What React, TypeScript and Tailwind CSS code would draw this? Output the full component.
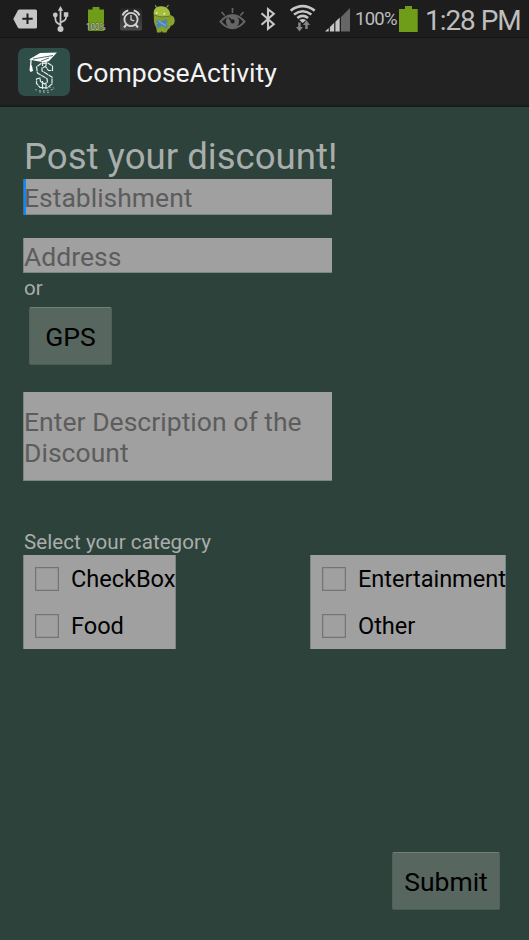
import { useState } from "react";
import clsx from "clsx";

const LEFT_CATEGORIES = ["CheckBox", "Food"];
const RIGHT_CATEGORIES = ["Entertainment", "Other"];

function StatusBar() {
  return (
    <div className="flex h-[37px] items-start overflow-hidden bg-[#1d1d1d] text-[#bebebe]">
      {/* keyboard / clear */}
      <svg className="ml-[13px] mt-[9px] h-5 w-[25px] shrink-0" viewBox="13 9 25 20">
        <path fill="#c6c6c6" d="M19.5 9.5H35.5Q37 9.5 37 11V27Q37 28.5 35.5 28.5H19.5Q18.5 28.5 17.8 27.5L13.3 19L17.8 10.5Q18.5 9.5 19.5 9.5Z" />
        <path stroke="#1d1d1d" strokeWidth="2" d="M22.3 18.8H32.7M27.5 13.6V24" />
      </svg>
      {/* usb */}
      <svg className="ml-[14px] mt-[6px] h-[27px] w-[18px] shrink-0" viewBox="52 6 18 27" fill="none" stroke="#c6c6c6" strokeWidth="1.8">
        <path d="M60.5 9V28M60.5 25C55.8 22.5 55.3 21.5 55.3 17M60.5 22.5C66 20.5 66.2 19 66.2 15" />
        <path fill="#c6c6c6" stroke="none" d="M60.5 6L63.2 10.7H57.8ZM63.8 12.3H68.3V16.8H63.8Z" />
        <circle cx="55.3" cy="15" r="2.4" fill="#c6c6c6" stroke="none" />
        <circle cx="60.5" cy="29" r="3" fill="#c6c6c6" stroke="none" />
      </svg>
      {/* small battery */}
      <svg className="ml-[15px] mt-[6px] h-[25px] w-[22px] shrink-0" viewBox="85 6 22 25">
        <path fill="#6f9d1a" d="M92.5 7H99.5V9.5H104V31H88V9.5H92.5Z" />
        <text x="86" y="29.7" textLength="19.5" lengthAdjust="spacingAndGlyphs" fontFamily="Roboto, sans-serif" fontSize="8.5" fill="#d0d0d0" stroke="#3a4a1c" strokeWidth="0.8" paintOrder="stroke">100%</text>
      </svg>
      {/* alarm */}
      <svg className="ml-[13px] mt-[8px] h-[23px] w-[22px] shrink-0" viewBox="120 8 22 23">
        <defs>
          <linearGradient id="alarmBg" x2="0" y2="1">
            <stop stopColor="#242424" />
            <stop offset="1" stopColor="#4a4a4a" />
          </linearGradient>
        </defs>
        <rect x="120" y="8" width="22" height="22.5" rx="2" fill="url(#alarmBg)" />
        <g fill="none" stroke="#d2d2d2">
          <circle cx="131" cy="19.5" r="6.6" strokeWidth="1.9" />
          <path strokeWidth="1.3" d="M131 15V19.7L134.3 21" />
          <path strokeWidth="2.1" d="M122.7 15.5Q124 11.3 128.3 10.5M139.3 15.5Q138 11.3 133.7 10.5M126.5 24.5L124 27.5M135.5 24.5L138 27.5" />
        </g>
      </svg>
      {/* android debug */}
      <svg className="ml-[10px] mt-[4px] h-[29px] w-6 shrink-0" viewBox="152 4 24 29">
        <ellipse cx="170.3" cy="20.5" rx="4.4" ry="5.3" fill="#8ba62d" />
        <path fill="#86a12a" d="M154 14L171 15Q173 27 167.5 30L166.5 32.5H162.5L162 31L160.5 32.5H157L156.3 28Q153 23 154 14Z" />
        <path fill="#a5bd3e" d="M153.8 14.5C153 8.8 156.5 5.8 161.5 6.2C167 6.6 170.5 10 170.2 15.5Q162 18 153.8 14.5Z" />
        <path stroke="#66801e" strokeWidth="1" d="M153.5 15Q161 18.5 170.5 16" fill="none" />
        <path stroke="#91aa33" strokeWidth="1.2" d="M156.5 7.5L155.3 5.3M166.5 7.5L168.5 5" />
        <circle cx="156.7" cy="12.8" r="0.9" fill="#eee" />
        <circle cx="164.3" cy="13.7" r="0.9" fill="#eee" />
        <path stroke="#4d83bd" strokeWidth="3.8" d="M157 20.5L167 27M167 20.5L157 26.5" />
        <path stroke="#7daad4" strokeWidth="1.2" d="M158 20.5L166 26" />
      </svg>
      {/* smart stay eye */}
      <svg className="ml-[43px] mt-[8px] h-[22px] w-[28px] shrink-0" viewBox="219 8 28 22">
        <path fill="none" stroke="#666" strokeWidth="1.7" d="M221.5 12L224.7 15.5M232.5 8V13M243.5 12L240.3 15.5" />
        <path fill="none" stroke="#666" strokeWidth="2" d="M220.5 21.7Q226 15 232.5 15T244.5 21.7Q239 28.3 232.5 28.3T220.5 21.7Z" />
        <circle cx="232.5" cy="21.5" r="6.6" fill="#666" />
        <path stroke="#1d1d1d" strokeWidth="1.5" d="M228.8 17.8L232 21" />
        <circle cx="232.6" cy="21.4" r="2.1" fill="#1d1d1d" />
      </svg>
      {/* bluetooth */}
      <svg className="ml-[13px] mt-[7px] h-6 w-4 shrink-0" viewBox="260 7 16 24" fill="none" stroke="#c6c6c6" strokeWidth="2.1">
        <path d="M261.5 13.2L273.8 24.3L268 28.8V9.2L273.8 13.7L261.5 24.8" />
      </svg>
      {/* wifi */}
      <svg className="ml-[14px] mt-[4px] h-7 w-[26px] shrink-0" viewBox="290 4 26 28">
        <g fill="none" stroke="#c6c6c6" strokeWidth="2.6">
          <path d="M290.7 10.6Q302.7 1.8 314.7 10.6M294 14.5Q302.7 8 311.4 14.5M297.3 18Q302.7 13.8 308.1 18" />
        </g>
        <path fill="#c6c6c6" d="M299.3 20Q302.7 17.8 306.1 20L302.7 23Z" />
        <path fill="#858585" d="M298.2 22.5H300.7V27H303L299.5 31.5L296 27H298.2ZM305.2 29V25H303L306.5 20.3L310 25H307.7V29Z" />
      </svg>
      {/* signal */}
      <svg className="ml-[9px] mt-[7px] h-[25px] w-[26px] shrink-0" viewBox="325 7 26 25">
        <path fill="#666" d="M341 17L350 8V31.5H341Z" />
        <path fill="#c6c6c6" d="M325 31.5L328.7 28V31.5ZM329.9 27L334.2 22.8V31.5H329.9ZM335.4 21.7L339.7 17.5V31.5H335.4Z" />
      </svg>
      <span className="ml-[4px] mt-[8px] w-[43px] whitespace-nowrap text-[18.5px] leading-[23px] tracking-[-0.75px]">100%</span>
      <svg className="ml-[1px] mt-[6px] h-[26px] w-[19px] shrink-0" viewBox="399 6 19 26">
        <path fill="#6f9d1a" d="M405 6H412V9H417.7V32H399V9H405Z" />
      </svg>
      <span className="ml-[7px] mt-[5px] whitespace-nowrap text-[28px] leading-8 tracking-[-1.05px]">1:28 PM</span>
    </div>
  );
}

function AppLogo() {
  return (
    <svg className="ml-[18px] h-12 w-[52px] shrink-0" viewBox="0 0 52 48">
      <rect width="52" height="48" rx="7" fill="#304e48" />
      <path fill="#fff" d="M11 11.5L22 5L39 4.5L31 13L27 14.5Q18 13 11 11.5Z" />
      <path fill="none" stroke="#304e48" strokeWidth="0.8" d="M15 11L35 7.5M23 13L31 10" />
      <path fill="none" stroke="#fff" strokeWidth="1.3" d="M13 12L12.7 18" />
      <path fill="#fff" d="M12 17.5H14L15 23L12.5 24L11.5 22Z" />
      <g fill="none" stroke="#e2e9e7" strokeWidth="1.2">
        <path strokeDasharray="5 .5" d="M34.5 22.5V18L30 15L23 15.5L18.5 19L19.5 25L29 30.5L29.5 34L26.5 36L22.5 33.5L22 30L18.5 31V35.5L22 39.5L29 40L34 36L34 29L24 23L24 20L27.5 18.5L30.5 22.5Z" />
        <path d="M24.5 14V18M28 14V18M24.5 33V41M28 36V41" />
        <path strokeDasharray="2 2" d="M17 41.5L23 43L29 42.5L37 41M21 44L32 44.5M31 39L36 40" opacity=".5" />
      </g>
    </svg>
  );
}

function ActionBar() {
  return (
    <header className="flex h-[70px] items-center border-b-2 border-t border-b-[#1b1b1b] border-t-[#151515] bg-[#222]">
      <AppLogo />
      <h1 className="ml-[6px] mt-[2px] whitespace-nowrap text-[26.6px] leading-8 text-[#f3f3f3]">ComposeActivity</h1>
    </header>
  );
}

const fieldClass =
  "block w-[309px] resize-none border-b border-l border-b-[#7b8582] border-l-[#7b8582] bg-[#a0a0a0] text-[26.5px] text-black outline-none placeholder:text-[#5c5c5c] placeholder:opacity-100";

const buttonClass =
  "block h-[58px] rounded-[2px] border border-b-[#4a5b55] border-l-[#4f605a] border-r-[#4f605a] border-t-[#71807b] bg-[#57665f] pt-[2px] text-[26.5px] leading-8 text-black";

function CategoryGroup({ items, className }: { items: string[]; className: string }) {
  const [checked, setChecked] = useState<string[]>([]);

  const toggle = (item: string) => {
    setChecked((c) => (c.includes(item) ? c.filter((i) => i !== item) : [...c, item]));
  };

  return (
    <div className={clsx("border-l border-r border-[#7b8582] bg-[#a0a0a0]", className)}>
      {items.map((item) => (
        <label key={item} className="flex h-[47px] items-center">
          <input
            type="checkbox"
            checked={checked.includes(item)}
            onChange={() => toggle(item)}
            className="ml-[11px] h-6 w-6 shrink-0 appearance-none border-[1.5px] border-[#747474] shadow-[inset_0_0_0_0.5px_#8a8a8a] checked:bg-[#33b5e5]"
          />
          <span className="ml-[12px] whitespace-nowrap text-[23.6px] leading-7 tracking-[-0.05px] text-black">{item}</span>
        </label>
      ))}
    </div>
  );
}

export default function App() {
  const [establishment, setEstablishment] = useState("");
  const [address, setAddress] = useState("");
  const [description, setDescription] = useState("");

  return (
    <div className="h-[940px] w-[529px] overflow-hidden bg-[#2c423a] font-['Roboto',sans-serif]">
      <StatusBar />
      <ActionBar />
      <main className="flex h-[833px] flex-col items-start pl-[23px] pt-[28px] text-[#a9adab]">
        <h2 className="h-[44px] whitespace-nowrap pl-px text-[36.6px] leading-[43px]">Post your discount!</h2>
        <div className="relative">
          <input
            value={establishment}
            onChange={(e) => setEstablishment(e.target.value)}
            placeholder="Establishment"
            className={clsx(fieldClass, "h-9 pt-[2px]")}
          />
          {/* text cursor */}
          <span className="absolute left-0 top-0 h-9 w-[3px] border-l border-[#3d6f96] bg-[#0d8af8]" />
        </div>
        <input
          value={address}
          onChange={(e) => setAddress(e.target.value)}
          placeholder="Address"
          className={clsx(fieldClass, "mt-[23px] h-[35px] pt-[3px]")}
        />
        <p className="h-[33px] pl-px pt-[3px] text-[20.5px] leading-6">or</p>
        <button className={clsx(buttonClass, "ml-[6px] mt-px w-[83px]")}>GPS</button>
        <textarea
          value={description}
          onChange={(e) => setDescription(e.target.value)}
          placeholder="Enter Description of the Discount"
          className={clsx(fieldClass, "mt-[27px] h-[89px] pt-[14px] leading-[31px] tracking-[0.03px]")}
        />
        <p className="mt-[49px] h-[25px] pl-px text-[20.6px] leading-6 tracking-[0.03px]">Select your category</p>
        <div className="flex">
          <CategoryGroup items={LEFT_CATEGORIES} className="w-[153px]" />
          <CategoryGroup items={RIGHT_CATEGORIES} className="ml-[134px] w-[196px]" />
        </div>
        <button className={clsx(buttonClass, "ml-[369px] mt-[203px] w-[108px]")}>Submit</button>
      </main>
    </div>
  );
}
